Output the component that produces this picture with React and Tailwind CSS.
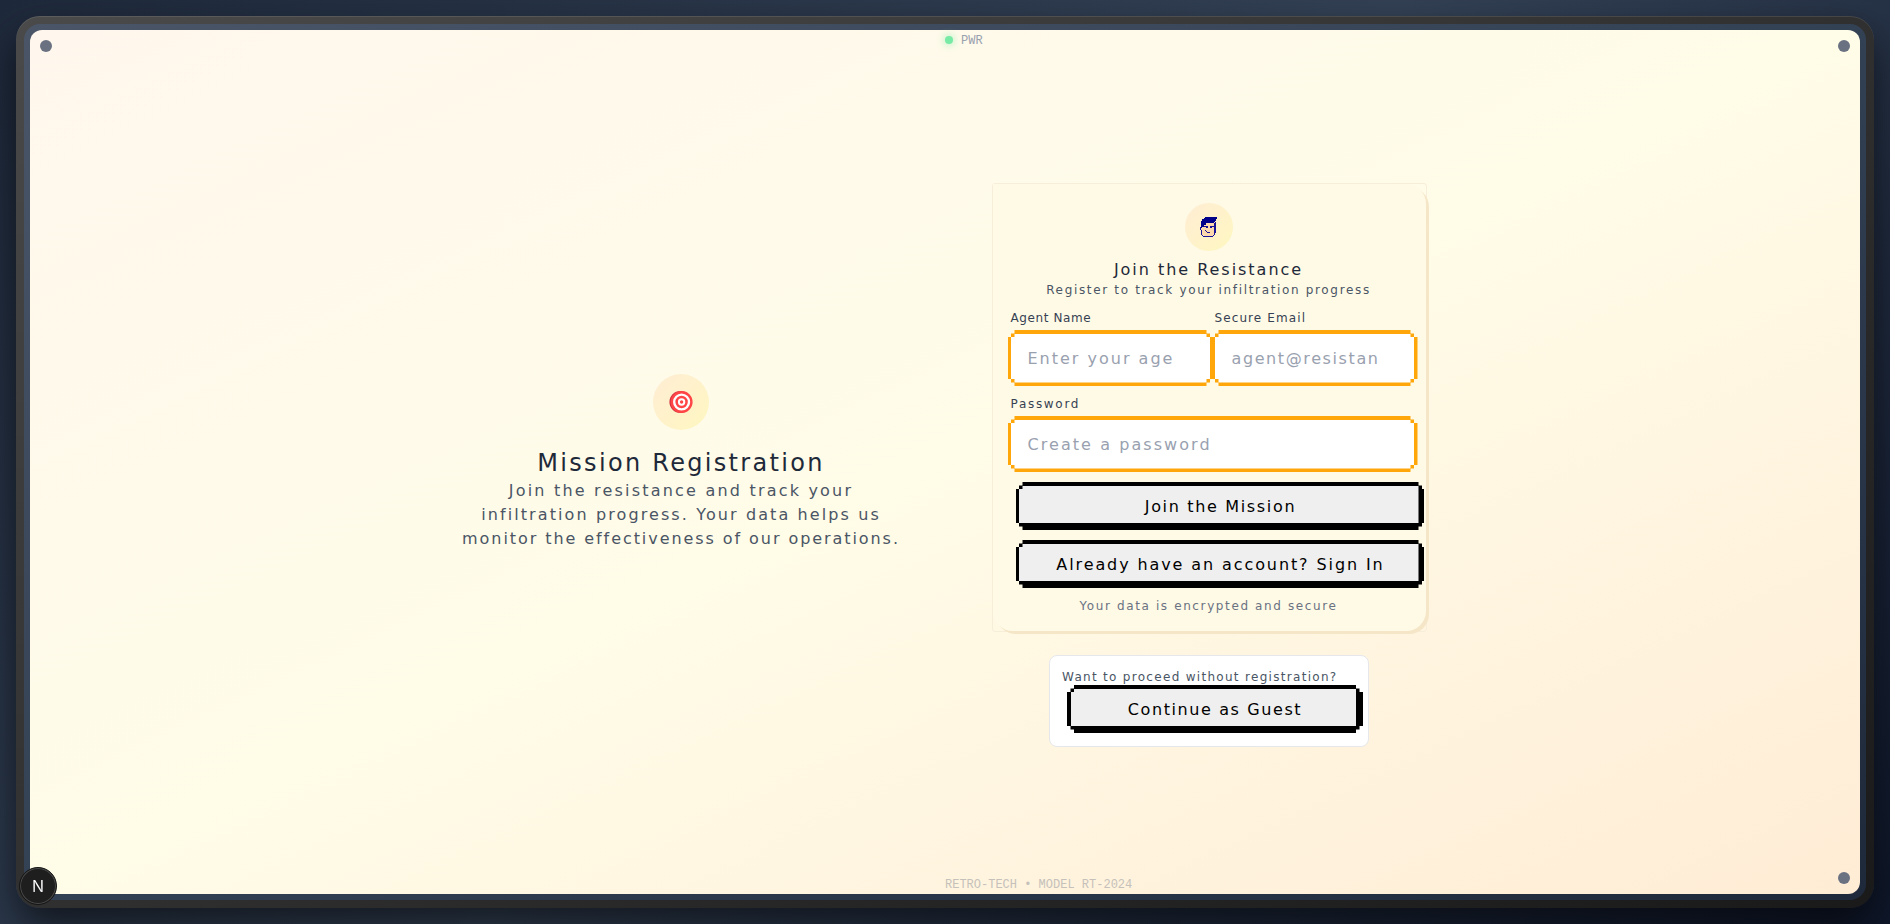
import React from 'react'
import clsx from 'clsx'

// Stepped corners: each step is 3.5px
const STEPPED =
  '[clip-path:polygon(0_7px,3.5px_7px,3.5px_3.5px,7px_3.5px,7px_0,calc(100%-7px)_0,calc(100%-7px)_3.5px,calc(100%-3.5px)_3.5px,calc(100%-3.5px)_7px,100%_7px,100%_calc(100%-7px),calc(100%-3.5px)_calc(100%-7px),calc(100%-3.5px)_calc(100%-3.5px),calc(100%-7px)_calc(100%-3.5px),calc(100%-7px)_100%,7px_100%,7px_calc(100%-3.5px),3.5px_calc(100%-3.5px),3.5px_calc(100%-7px),0_calc(100%-7px))]'

const NOTCHED =
  '[clip-path:polygon(0_3.5px,3.5px_3.5px,3.5px_0,calc(100%-3.5px)_0,calc(100%-3.5px)_3.5px,100%_3.5px,100%_calc(100%-3.5px),calc(100%-3.5px)_calc(100%-3.5px),calc(100%-3.5px)_100%,3.5px_100%,3.5px_calc(100%-3.5px),0_calc(100%-3.5px))]'

const NOTCHED_TOP_LEFT = '[clip-path:polygon(0_3.5px,3.5px_3.5px,3.5px_0,100%_0,100%_100%,0_100%)]'

function Screw({ className }) {
  return <span className={clsx('absolute size-3 rounded-full bg-gray-500', className)} />
}

function TargetIcon() {
  return (
    <svg width="24" height="24" viewBox="0 0 24 24" fill="none">
      <circle cx="11.4" cy="12" r="11" fill="#cf3640" />
      <circle cx="12.6" cy="12" r="11" fill="#ff4545" />
      <circle cx="12.6" cy="12" r="7.4" stroke="#fff" strokeWidth="2.4" />
      <circle cx="12.6" cy="12" r="2.7" stroke="#fff" strokeWidth="2" />
    </svg>
  )
}

function AgentIcon() {
  return (
    <svg width="17" height="20" viewBox="0 0 17 20" shapeRendering="crispEdges">
      <path fill="#ffd9ae" d="M2 5h13v13h-2v1H4v-1H2v-4H1v-3h1z" />
      {/* hair */}
      <path fill="#00008b" d="M5 0h12v2h-1v2h-1v1h-1v1H6v2H4v2H2v1H1V4h1V2h2V1h1z" />
      {/* outline */}
      <path fill="#1a1496" d="M0 10h1v3H0zM1 13h1v5H1zM2 18h1v1H2zM3 19h10v1H3zM13 18h1v1h-1zM14 6h1v12h-1zM15 5h1v11h-1z" />
      {/* eyes, nose, mouth */}
      <path fill="#1a1496" d="M4 9h4v1H4zM6 10h2v1H6zM10 9h4v1h-4zM10 10h2v1h-2zM5 13h1v1H5zM6 14h1v1H6zM7 15h3v1H7z" />
    </svg>
  )
}

function PixelInput({ label, labelTracking, placeholder, tracking, type = 'text', className }) {
  return (
    <label className={clsx('block', className)}>
      <span className={clsx('mb-1 ml-[3px] block text-xs text-gray-700', labelTracking)}>{label}</span>
      <span className={clsx('block h-14 bg-[#ffa60a] p-[3.5px]', STEPPED)}>
        <span className={clsx('block h-full bg-white pr-[36.5px] pl-[16.5px]', NOTCHED)}>
          <input
            type={type}
            placeholder={placeholder}
            className={clsx('block h-full w-full text-base outline-none placeholder:text-gray-400', tracking)}
          />
        </span>
      </span>
    </label>
  )
}

function PixelButton({ children, className }) {
  return (
    <button
      className={clsx('relative block h-12 bg-black pt-[3.5px] pr-[7px] pb-[7px] pl-[3.5px] text-base text-black', STEPPED, className)}
    >
      <span className={clsx('block h-full bg-[#efefef]', NOTCHED_TOP_LEFT)} />
      <span className="absolute inset-0 flex items-center justify-center pt-px whitespace-nowrap">{children}</span>
    </button>
  )
}

function MissionIntro() {
  return (
    <section className="flex flex-col items-center text-center whitespace-nowrap">
      <div className="mb-[17px] flex size-14 items-center justify-center rounded-full bg-linear-to-br from-orange-100 to-[#fef7c0]">
        <TargetIcon />
      </div>
      <h1 className="text-2xl tracking-[2.3px] text-gray-800">Mission Registration</h1>
      <p className="text-base text-gray-600">
        <span className="block tracking-[2.2px]">Join the resistance and track your</span>
        <span className="block tracking-[2.1px]">infiltration progress. Your data helps us</span>
        <span className="block tracking-[1.93px]">monitor the effectiveness of our operations.</span>
      </p>
    </section>
  )
}

function RegisterCard() {
  return (
    <div className="h-[449px] w-[435px] rounded-[3px] border border-[#f7eeda]">
      <div className="h-full rounded-[20px] rounded-tl-none bg-[#fffae6] pr-[2px] pl-[15px] shadow-[3px_3px_0_#f5e6c8]">
        <div className="overflow-hidden pt-[19px]">
          <div className="w-[402px] text-center whitespace-nowrap">
            <div className="mx-auto mb-[7px] flex size-12 items-center justify-center rounded-full bg-linear-to-br from-orange-100 to-[#fef7c0]">
              <AgentIcon />
            </div>
            <h2 className="text-base tracking-[1.97px] text-gray-800">Join the Resistance</h2>
            <p className="text-xs tracking-[1.66px] text-gray-600">Register to track your infiltration progress</p>
          </div>

          <div className="mt-3 w-[410px]">
            <div className="flex">
              <PixelInput
                className="w-[206px]"
                label="Agent Name"
                labelTracking="tracking-[0.6px]"
                placeholder="Enter your agent name"
                tracking="tracking-[2px]"
              />
              <PixelInput
                className="-ml-0.5 w-[206px]"
                label="Secure Email"
                labelTracking="tracking-[1.1px]"
                placeholder="agent@resistance.com"
                tracking="tracking-[1.6px]"
                type="email"
              />
            </div>
            <PixelInput
              className="mt-2.5"
              label="Password"
              labelTracking="tracking-[1.7px]"
              placeholder="Create a password"
              tracking="tracking-[2.06px]"
              type="password"
            />
          </div>

          <PixelButton className="mt-2.5 ml-2 w-[410px] tracking-[1.66px]">Join the Mission</PixelButton>
          <PixelButton className="mt-2.5 ml-2 w-[410px] tracking-[1.9px]">Already have an account? Sign In</PixelButton>
          <p className="mt-2.5 w-[402px] text-center text-xs tracking-[1.62px] text-gray-500">
            Your data is encrypted and secure
          </p>
        </div>
      </div>
    </div>
  )
}

function GuestCard() {
  return (
    <div className="mt-[23px] h-[92px] w-[320px] rounded-lg border border-gray-200 bg-white px-3 pt-[13px]">
      <p className="text-xs tracking-[1.3px] whitespace-nowrap text-gray-600">Want to proceed without registration?</p>
      <PixelButton className="ml-[5px] w-[296px] tracking-[1.6px]">Continue as Guest</PixelButton>
    </div>
  )
}

export default function App() {
  return (
    <div className="h-screen overflow-hidden bg-linear-135 from-[#1e293b] via-[#334155] to-[#0f172a] p-4 font-['DejaVu_Sans',sans-serif]">
      <div className="h-full rounded-3xl bg-linear-to-br from-[#4a4a4a] via-[#303030] to-[#1a1a1a] p-2 shadow-[0_20px_40px_rgba(0,0,0,0.6),inset_0_1px_0_rgba(255,255,255,0.1)]">
        <div className="h-full rounded-2xl bg-linear-to-br from-[#4a5568] via-[#334155] to-[#1e293b] p-1.5">
          <main className="relative flex h-full items-center justify-center rounded-xl bg-linear-to-br from-[#fff7ed] via-[#fffce8] to-[#ffecd5]">
            <div className="grid w-[1056px] grid-cols-2 items-center">
              <MissionIntro />
              <div className="flex flex-col items-center pt-1.5">
                <RegisterCard />
                <GuestCard />
              </div>
            </div>

            <Screw className="top-2.5 left-2.5" />
            <Screw className="top-2.5 right-2.5" />
            <Screw className="right-2.5 bottom-2.5" />

            <div className="absolute top-[3px] left-1/2 flex items-center gap-2 font-['Liberation_Mono',monospace] text-xs text-gray-400">
              <span className="-mt-0.5 size-2 rounded-full bg-[#77eba6] shadow-[0_0_8px_#86efac]" />
              PWR
            </div>
            <div className="absolute bottom-px left-1/2 font-['Liberation_Mono',monospace] text-xs whitespace-nowrap text-[#c5c1ba]">
              RETRO-TECH • MODEL RT-2024
            </div>
          </main>
        </div>
      </div>

      {/* Dev tools badge */}
      <div className="fixed bottom-[19px] left-[19px] flex size-[38px] items-center justify-center rounded-full border border-[#171717] bg-[#1e1e1e] shadow-[inset_0_0_0_1px_#4a4a4a]">
        <span className="bg-linear-to-b from-white from-50% to-gray-300 bg-clip-text font-['Inter',sans-serif] text-[16px] text-transparent">
          N
        </span>
      </div>
    </div>
  )
}
